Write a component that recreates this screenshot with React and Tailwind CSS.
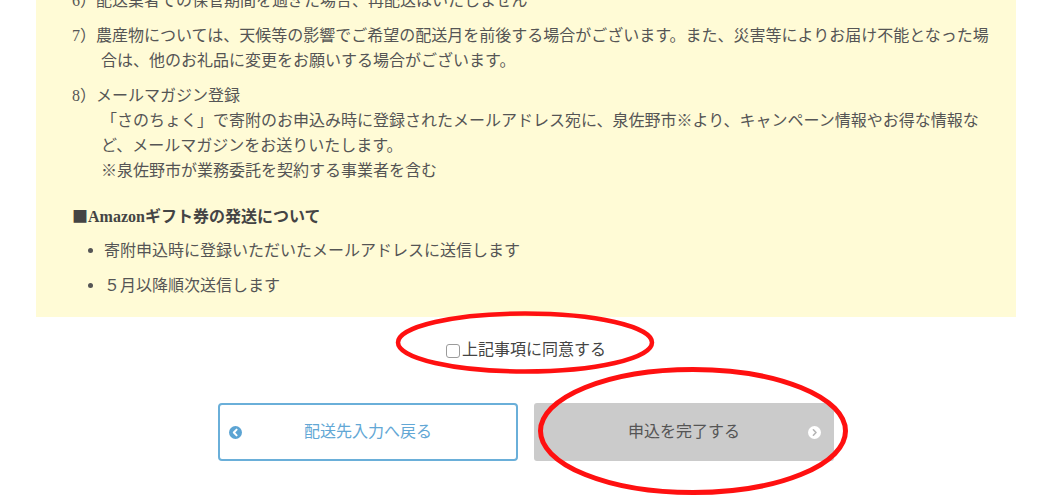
export default function App() {
  return (
    <div className="relative w-[1049px] h-[499px] overflow-hidden bg-white font-['Liberation_Serif','Noto_Sans_CJK_JP',serif]">
      <div className="ml-[36px] w-[980px]">
        <div className="flex flex-col bg-[#fffbd6] pl-[36px] pr-[16px] pb-[19px] text-[16px] leading-[25px] text-[#555]">
          <div className="-mt-[12px] flex flex-col">
            <div className="pl-[29px] indent-[-29px]">6）配送業者での保管期間を過ぎた場合、再配送はいたしません</div>
            <div className="mt-[10px] pl-[29px] indent-[-29px]">
              7）農産物については、天候等の影響でご希望の配送月を前後する場合がございます。また、災害等によりお届け不能となった場合は、他のお礼品に変更をお願いする場合がございます。
            </div>
            <div className="mt-[10px] pl-[29px]">
              <div className="indent-[-29px]">8）メールマガジン登録</div>
              <div>「さのちょく」で寄附のお申込み時に登録されたメールアドレス宛に、泉佐野市※より、キャンペーン情報やお得な情報など、メールマガジンをお送りいたします。</div>
              <div>※泉佐野市が業務委託を契約する事業者を含む</div>
            </div>
            <div className="mt-[20px] h-[25px] font-bold text-[#444]">
              <span className="font-['Noto_Sans_CJK_JP',sans-serif]">■</span>Amazonギフト券の発送について
            </div>
            <div className="mt-[10px] flex items-center">
              <span className="ml-[16px] mr-[11px] h-[5px] w-[5px] rounded-full bg-[#555]"></span>
              <span>寄附申込時に登録いただいたメールアドレスに送信します</span>
            </div>
            <div className="mt-[10px] flex items-center">
              <span className="ml-[16px] mr-[11px] h-[5px] w-[5px] rounded-full bg-[#555]"></span>
              <span>５月以降順次送信します</span>
            </div>
          </div>
        </div>

        <div className="mt-[21px] flex items-center justify-center text-[16px] leading-[24px] text-[#444]">
          <span className="mr-[2px] mt-[2px] h-[14px] w-[14px] rounded-[3px] border border-[#9b9b9b] bg-white"></span>
          <span>上記事項に同意する</span>
        </div>

        <div className="mt-[41px] flex justify-center gap-[16px] text-[16px]">
          <div className="flex h-[58px] w-[300px] items-center rounded-[4px] border-2 border-[#6aafd9] bg-white px-[9px]">
            <svg width="13" height="13" viewBox="0 0 13 13">
              <circle cx="6.5" cy="6.5" r="6.5" fill="#5ca4d3" />
              <path d="M7.6 3.6 L4.8 6.5 L7.6 9.4" fill="none" stroke="#fff" strokeWidth="2" strokeLinecap="round" strokeLinejoin="round" />
            </svg>
            <span className="flex-1 text-center text-[#62a7d5]">配送先入力へ戻る</span>
            <span className="w-[13px]"></span>
          </div>
          <div className="flex h-[58px] w-[300px] items-center rounded-[3px] bg-[#cbcbcb] px-[13px]">
            <span className="w-[13px]"></span>
            <span className="flex-1 text-center text-[#555]">申込を完了する</span>
            <svg width="13" height="13" viewBox="0 0 13 13">
              <circle cx="6.5" cy="6.5" r="6.5" fill="#fff" />
              <path d="M5.4 3.8 L8 6.5 L5.4 9.2" fill="none" stroke="#b5b5b5" strokeWidth="1.6" strokeLinecap="round" strokeLinejoin="round" />
            </svg>
          </div>
        </div>
      </div>

      <svg className="pointer-events-none absolute left-0 top-0" width="1049" height="499" viewBox="0 0 1049 499">
        <ellipse cx="525" cy="342.5" rx="127" ry="29" fill="none" stroke="#ff1010" strokeWidth="4.5" />
        <ellipse cx="693" cy="431" rx="152.5" ry="61.5" fill="none" stroke="#ff1010" strokeWidth="5" />
      </svg>
    </div>
  );
}
